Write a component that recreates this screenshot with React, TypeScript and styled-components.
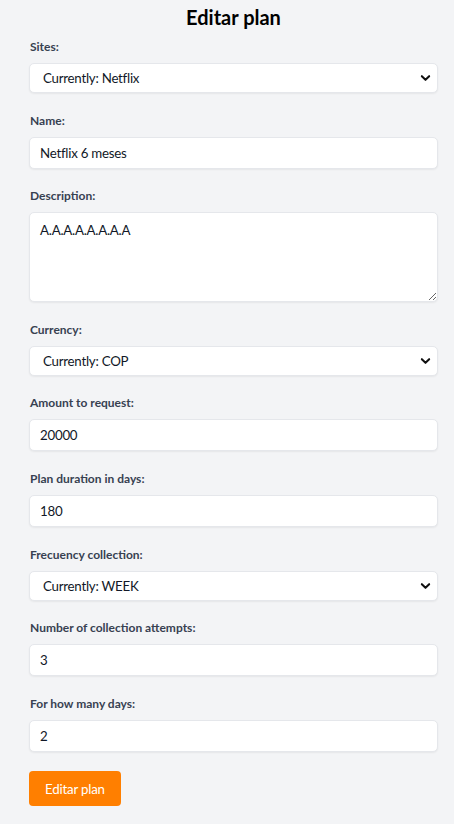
import React from 'react'
import styled, { createGlobalStyle } from 'styled-components'

const GlobalStyle = createGlobalStyle`
  html, body {
    margin: 0;
    padding: 0;
    background-color: #f3f4f6;
    font-family: Lato, 'Noto Sans', Arial, sans-serif;
  }
  * {
    box-sizing: border-box;
  }
`

const Page = styled.div`
  min-height: 824px;
  padding: 3px 16px 0 29px;
`

const Title = styled.h1`
  margin: 0 0 8px;
  font-size: 20px;
  line-height: 28px;
  font-weight: 700;
  text-align: center;
  color: #000;
`

const Form = styled.form`
  display: flex;
  flex-direction: column;
  gap: 19.6px;
`

const Field = styled.div`
  display: flex;
  flex-direction: column;
  gap: 8px;
`

const Label = styled.label`
  font-size: 12px;
  line-height: 16px;
  font-weight: 700;
  color: #374151;
  padding-left: 1px;
`

const fieldBase = `
  width: 100%;
  border: 1px solid #e5e7eb;
  border-radius: 5px;
  background: #fff;
  box-shadow: 0 1px 2px rgba(0, 0, 0, 0.06);
  font-family: inherit;
  font-size: 13.3px;
  letter-spacing: -0.25px;
  color: #111827;
  outline: none;
`

const TextInput = styled.input`
  ${fieldBase}
  height: 32px;
  padding: 0 10px;
`

const TextArea = styled.textarea`
  ${fieldBase}
  height: 90px;
  padding: 7px 10px;
  line-height: 20px;
  resize: vertical;
`

const SelectWrap = styled.div`
  position: relative;
`

const Select = styled.select`
  ${fieldBase}
  height: 30px;
  padding: 0 30px 0 13px;
  appearance: none;
  -webkit-appearance: none;
`

const Chevron = styled.svg`
  position: absolute;
  right: 7px;
  top: 50%;
  width: 11px;
  height: 11px;
  transform: translateY(-50%);
  pointer-events: none;
`

const SubmitButton = styled.button`
  align-self: flex-start;
  height: 35px;
  padding: 0 16px;
  border: none;
  border-radius: 4px;
  background-color: #ff7f00;
  color: #fff;
  font-family: inherit;
  font-size: 13.3px;
  letter-spacing: -0.2px;
  cursor: pointer;
`

function SelectField({ label, value }: { label: string; value: string }) {
  return (
    <Field>
      <Label>{label}</Label>
      <SelectWrap>
        <Select defaultValue={value}>
          <option value={value}>{value}</option>
        </Select>
        <Chevron viewBox="0 0 12 12">
          <path d="M2 4 L6 8 L10 4" fill="none" stroke="#111" strokeWidth="2.2" strokeLinecap="round" strokeLinejoin="round" />
        </Chevron>
      </SelectWrap>
    </Field>
  )
}

function InputField({ label, value }: { label: string; value: string }) {
  return (
    <Field>
      <Label>{label}</Label>
      <TextInput defaultValue={value} />
    </Field>
  )
}

export default function App() {
  return (
    <Page>
      <GlobalStyle />
      <Title>Editar plan</Title>
      <Form onSubmit={(e) => e.preventDefault()}>
        <SelectField label="Sites:" value="Currently: Netflix" />
        <InputField label="Name:" value="Netflix 6 meses" />
        <Field>
          <Label>Description:</Label>
          <TextArea defaultValue="A.A.A.A.A.A.A.A" />
        </Field>
        <SelectField label="Currency:" value="Currently: COP" />
        <InputField label="Amount to request:" value="20000" />
        <InputField label="Plan duration in days:" value="180" />
        <SelectField label="Frecuency collection:" value="Currently: WEEK" />
        <InputField label="Number of collection attempts:" value="3" />
        <InputField label="For how many days:" value="2" />
        <SubmitButton type="submit">Editar plan</SubmitButton>
      </Form>
    </Page>
  )
}
